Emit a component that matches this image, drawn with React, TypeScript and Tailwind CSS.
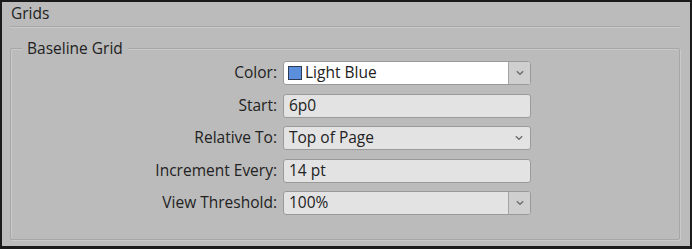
import React from "react";

type Field = {
  label: string;
  value: string;
  kind: "select" | "combo" | "input";
  swatch?: boolean;
  white?: boolean;
};

const FIELDS: Field[] = [
  { label: "Color:", value: "Light Blue", kind: "combo", swatch: true, white: true },
  { label: "Start:", value: "6p0", kind: "input" },
  { label: "Relative To:", value: "Top of Page", kind: "select" },
  { label: "Increment Every:", value: "14 pt", kind: "input" },
  { label: "View Threshold:", value: "100%", kind: "combo" },
];

function Chevron() {
  return (
    <svg width="10" height="6" viewBox="0 0 10 6" className="block">
      <path d="M1.8 1.3 L5 4.3 L8.2 1.3" fill="none" stroke="#6e6e6e" strokeWidth="1.4" />
    </svg>
  );
}

function FieldRow({ f }: { f: Field }) {
  return (
    <div className="flex items-center h-[24px]">
      <div className="w-[272px] pr-[6px] text-right text-[15.5px] text-[#222]">{f.label}</div>
      <div
        className={`flex items-center w-[248px] h-[24px] rounded-[3px] border border-[#9a9a9a] overflow-hidden ${f.white ? "bg-white" : "bg-[#e3e3e3]"}`}
      >
        <div className="flex-1 flex items-center pl-[4px] text-[15.5px] text-[#222]">
          {f.swatch && <span className="inline-block w-[14px] h-[14px] bg-[#5b8edb] border border-[#2d3a55] mr-[3px]" />}
          <span className={f.swatch ? "" : "pl-[1px]"}>{f.value}</span>
        </div>
        {f.kind === "combo" && (
          <div className="w-[22px] h-full flex items-center justify-center bg-[#cfcfcf] border-l border-[#a5a5a5]">
            <Chevron />
          </div>
        )}
        {f.kind === "select" && (
          <div className="w-[22px] h-full flex items-center justify-center">
            <Chevron />
          </div>
        )}
      </div>
    </div>
  );
}

export default function App() {
  return (
    <div
      className="w-[692px] h-[249px] bg-[#bbbbbb] border-2 border-[#1a1a1a] border-b-[3px] px-[8px] pt-[2px]"
      style={{ fontFamily: '"Open Sans", "Liberation Sans", sans-serif' }}
    >
      <div className="text-[15.5px] text-[#222] leading-[18px] pl-[1px]">Grids</div>
      <div className="mt-[4px] mr-[2px] border-t border-b border-t-[#a9a9a9] border-b-[#cacaca]" />
      <div className="relative mt-[20px] mr-[2px] h-[192px] border border-[#a7a7a7] shadow-[inset_1px_1px_0_#c9c9c9,1px_1px_0_#c9c9c9] rounded-[2px]">
        <div className="absolute -top-[11px] left-[11px] px-[5px] bg-[#bbbbbb] text-[15.5px] text-[#222] leading-[20px]">
          Baseline Grid
        </div>
        <div className="flex flex-col gap-[8.5px] pt-[12px]">
          {FIELDS.map((f) => (
            <FieldRow key={f.label} f={f} />
          ))}
        </div>
      </div>
    </div>
  );
}
